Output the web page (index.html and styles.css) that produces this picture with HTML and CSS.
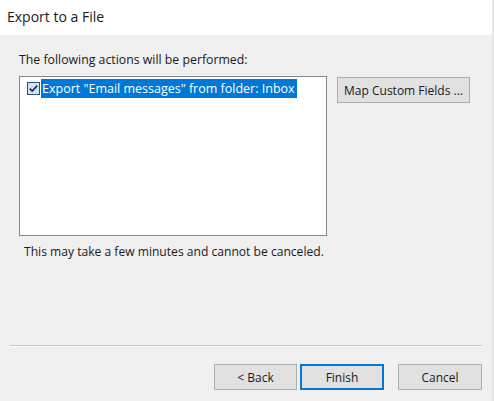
FILE: index.html
```html
<!DOCTYPE html>
<html>
<head>
<meta charset="utf-8">
<link rel="stylesheet" href="styles.css">
</head>
<body>
<div class="window">
  <header class="titlebar">Export to a File</header>
  <main class="content">
    <p class="label">The following actions will be performed:</p>
    <div class="row">
      <div class="list">
        <div class="item">
          <span class="check">
            <svg width="13" height="13" viewBox="0 0 13 13">
              <rect x="0.5" y="0.5" width="12" height="12" fill="#cfe3f5" stroke="#2f4f7a"/>
              <path d="M2.8 6.6 L5.2 9 L10.2 3.6" fill="none" stroke="#1d2e46" stroke-width="1.6"/>
            </svg>
          </span>
          <span class="item-text">Export "Email messages" from folder: Inbox</span>
        </div>
      </div>
      <button class="btn map">Map Custom Fields ...</button>
    </div>
    <p class="note">This may take a few minutes and cannot be canceled.</p>
  </main>
  <footer class="footer">
    <div class="sep"></div>
    <div class="buttons">
      <button class="btn nav back">&lt; Back</button>
      <button class="btn nav default">Finish</button>
      <button class="btn nav cancel">Cancel</button>
    </div>
  </footer>
</div>
</body>
</html>
```
FILE: styles.css
```css
* { box-sizing: border-box; }
html, body {
  margin: 0;
  padding: 0;
  background: #f0f0f0;
}
body {
  font-family: "Open Sans", "Noto Sans", sans-serif;
  font-size: 12px;
  color: #1a1a1a;
}
.window {
  width: 494px;
  height: 401px;
  display: flex;
  flex-direction: column;
  border-right: 2px solid #e6e6e6;
}
.titlebar {
  height: 35px;
  background: #ffffff;
  padding: 7px 0 0 7px;
  font-size: 14px;
  color: #1a1a1a;
}
.content {
  flex: 1;
  padding: 15px 0 0 19px;
}
.label {
  margin: 0;
  height: 26px;
  line-height: 20px;
  font-size: 12.3px;
}
.row {
  display: flex;
  align-items: flex-start;
  gap: 10px;
}
.list {
  width: 308px;
  height: 160px;
  background: #ffffff;
  border: 1px solid #828790;
  padding: 2px 0 0 6px;
}
.item {
  display: flex;
  align-items: center;
  height: 19px;
}
.check {
  width: 15px;
  height: 19px;
  display: flex;
  align-items: center;
  padding-left: 1px;
  background: #ffffff;
}
.check svg { display: block; }
.item-text {
  background: #0078d7;
  color: #ffffff;
  height: 19px;
  line-height: 19px;
  padding: 0 2px 0 1px;
  white-space: nowrap;
  font-size: 12.5px;
}
.btn {
  font-family: inherit;
  font-size: 12px;
  color: #1a1a1a;
  background: #e1e1e1;
  border: 1px solid #adadad;
  padding: 0;
  margin: 0;
  height: 26px;
}
.map {
  width: 133px;
  margin-top: 1px;
}
.note {
  margin: 6px 0 0 5px;
  line-height: 20px;
  font-size: 12.1px;
}
.footer {
  padding: 0 10px 0 10px;
  height: 56px;
}
.sep {
  height: 1px;
  background: #c8c8c8;
  border-bottom: 1px solid #ffffff;
  box-sizing: content-box;
}
.buttons {
  display: flex;
  justify-content: flex-end;
  padding-top: 17px;
}
.nav {
  width: 84px;
  height: 26px;
}
.back {
  width: 83px;
}
.default {
  margin-left: 3px;
  border: 2px solid #0078d7;
}
.cancel {
  margin-left: 14px;
}
```
